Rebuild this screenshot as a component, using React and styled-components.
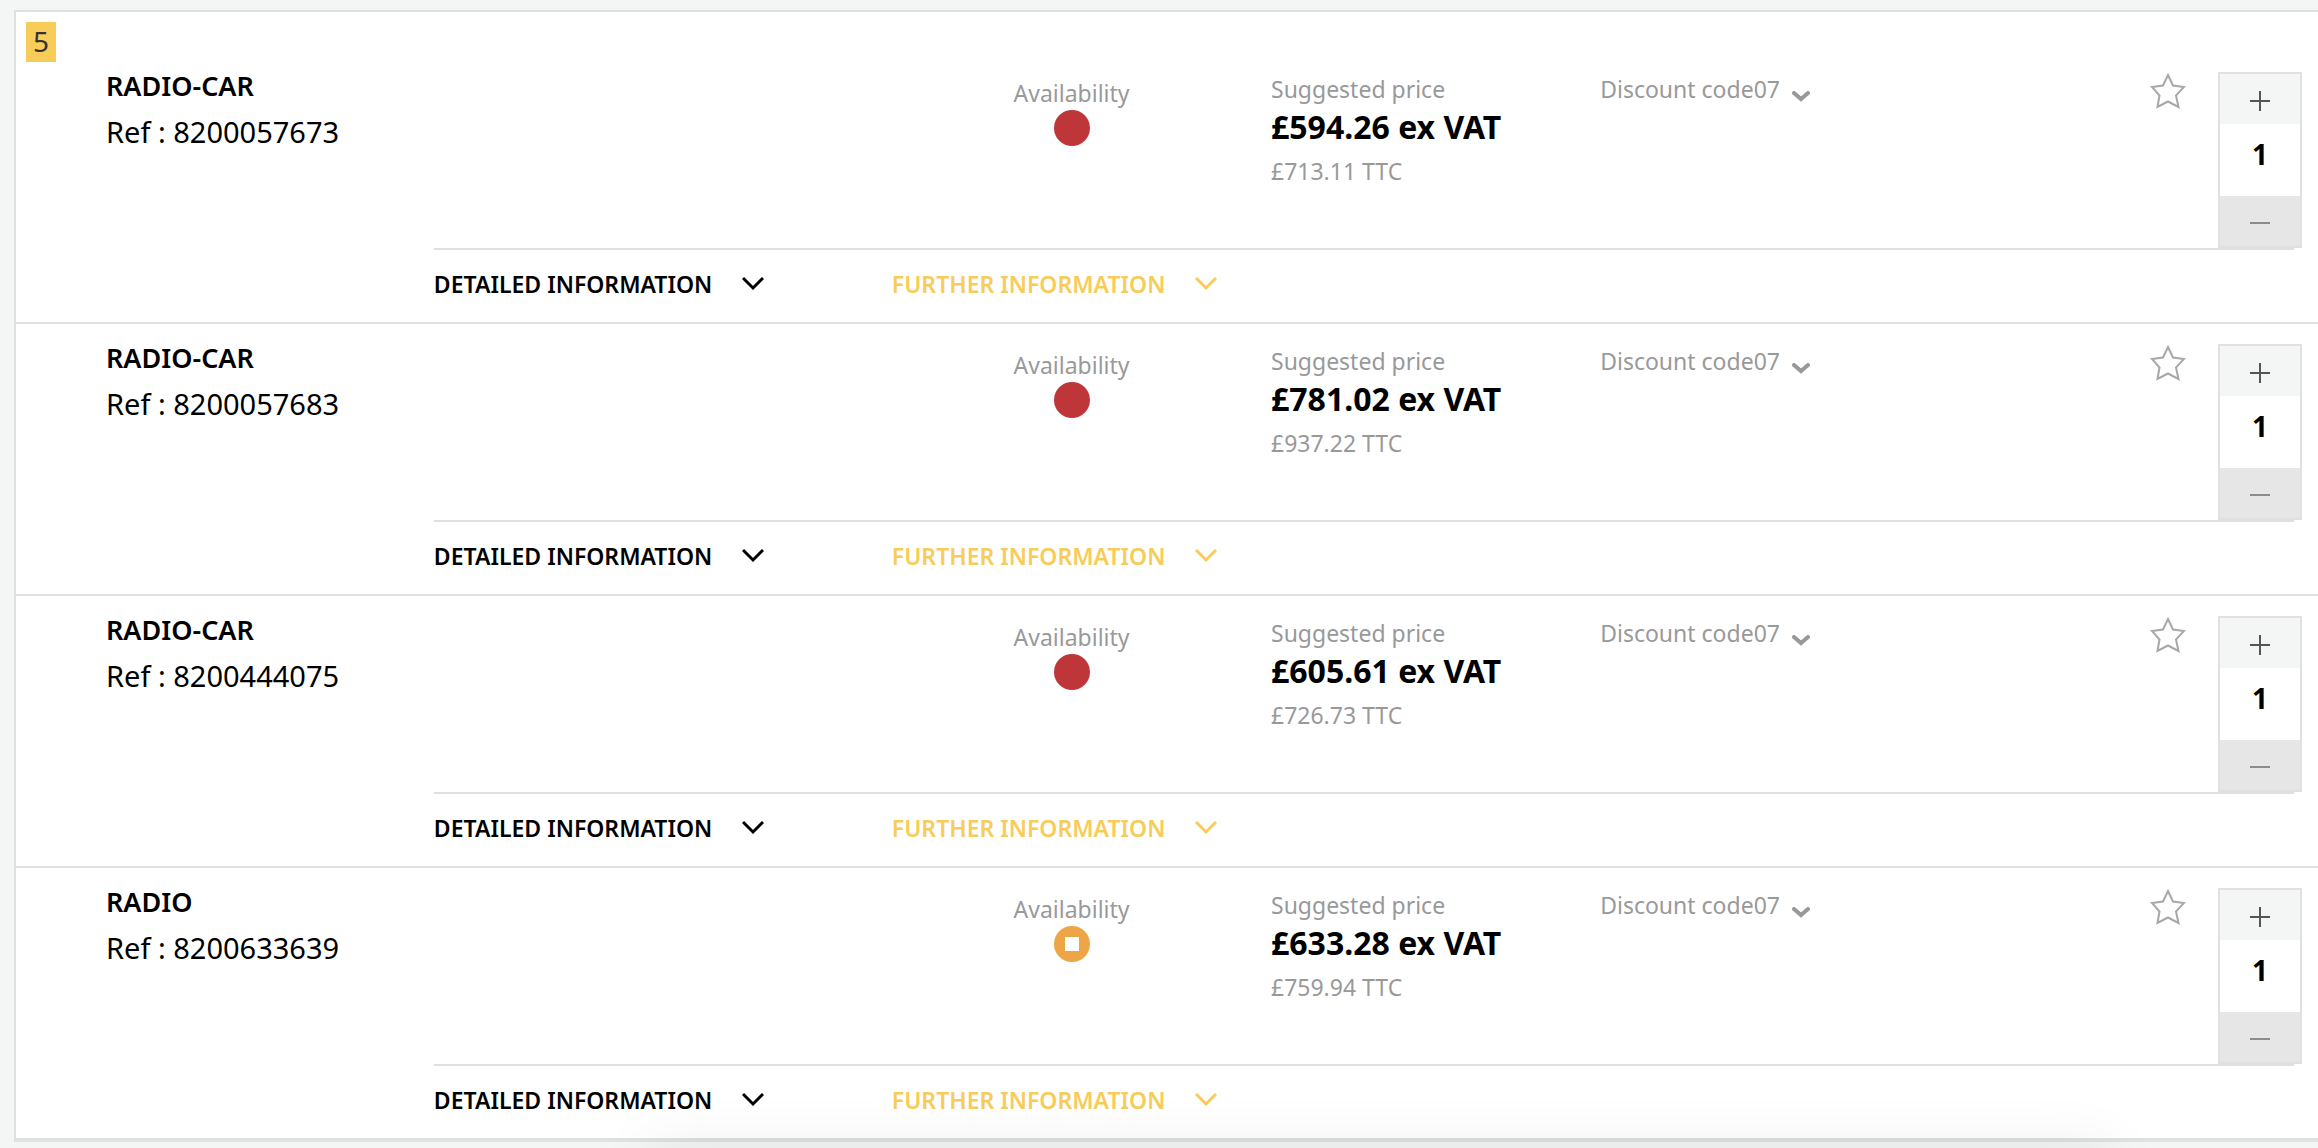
import React, { useState } from 'react'
import styled, { createGlobalStyle } from 'styled-components'

const GlobalStyle = createGlobalStyle`
    * {
        box-sizing: border-box;
    }

    body {
        margin: 0;
        background: #f4f6f5;
        color: #000;
        font-family: 'Noto Sans', 'Open Sans', sans-serif;
        overflow-x: hidden;
    }

    button, input {
        margin: 0;
        padding: 0;
        border: 0;
        background: none;
        color: inherit;
        font-family: inherit;
    }

    button {
        cursor: pointer;
    }

    svg {
        display: block;
    }
`

const Results = styled.main`
    position: relative;
    margin: 10px 0 0 14px;
    padding-top: 40px;
    background: #fff;
    border: 2px solid #e0e0e0;
    border-right: 0;
`

const Count = styled.span`
    position: absolute;
    top: 10px;
    left: 10px;
    width: 30px;
    background: #f8cc58;
    color: #333;
    font-size: 28px;
    line-height: 38px;
    padding-bottom: 2px;
    text-align: center;
`

const Item = styled.article`
    padding-top: 20px;
    border-bottom: 2px solid #e0e0e0;
`

const Summary = styled.div`
    display: grid;
    grid-template-columns: 41.8% 13.1% 14.4% 1fr 68px 84px;
    padding-right: 16px;
`

const Product = styled.div`
    padding-left: 90px;

    h2 {
        margin: 0 0 14px;
        font-size: 27px;
        font-weight: 600;
        line-height: 28px;
    }

    p {
        margin: 0;
        font-size: 29px;
        line-height: 36px;
    }
`

const Availability = styled.div`
    display: flex;
    flex-direction: column;
    align-items: center;
    width: 200px;
    padding-top: 4px;
`

const Label = styled.span`
    color: #999;
    font-size: 23px;
    line-height: 34px;
    white-space: nowrap;
`

const Price = styled.div`
    display: flex;
    flex-direction: column;
    white-space: nowrap;

    strong {
        font-size: 32px;
        font-weight: 700;
        line-height: 42px;
    }

    small {
        color: #999;
        font-size: 23px;
        line-height: 46px;
    }
`

const Discount = styled.button`
    display: flex;
    align-items: flex-start;
    justify-self: start;
    align-self: start;
    gap: 12px;
    color: #999;

    svg {
        margin-top: 19px;
    }
`

const Favourite = styled.button`
    align-self: start;
    width: 36px;
    height: 36px;
    margin-top: 1px;
    color: #a8a8a8;
`

const Stepper = styled.div`
    display: flex;
    flex-direction: column;
    border: 2px solid #e0e0e0;

    input {
        width: 100%;
        height: 72px;
        padding-bottom: 12px;
        font-size: 28px;
        font-weight: 700;
        text-align: center;
    }
`

const StepButton = styled.button`
    display: flex;
    align-items: center;
    justify-content: center;
    height: 50px;
    padding-top: 4px;
    background: ${({ $muted }) => ($muted ? '#e6e6e6' : '#f4f6f5')};
    color: ${({ $muted }) => ($muted ? '#8c8c8c' : '#555')};
`

const Panels = styled.div`
    display: grid;
    grid-template-columns: 458px 1fr;
    justify-items: start;
    height: 74px;
    margin: 0 24px 0 18.15%;
    padding-bottom: 4px;
    border-top: 2px solid #e0e0e0;
`

const PanelToggle = styled.button`
    display: flex;
    align-items: center;
    gap: 30px;
    color: ${({ $accent }) => ($accent ? '#f8cc58' : '#000')};
    font-size: 23px;
    font-weight: 600;
    white-space: nowrap;
`

const BarShadow = styled.div`
    position: fixed;
    right: 9%;
    bottom: -80px;
    left: 28%;
    height: 80px;
    box-shadow: 0 0 60px rgba(0, 0, 0, 0.08);
    pointer-events: none;
`

const Chevron = () => (
    <svg width="22" height="14" viewBox="0 0 22 14" fill="none" stroke="currentColor" strokeWidth="3" aria-hidden="true">
        <path d="M1 1l10 10L21 1" />
    </svg>
)

const SmallChevron = () => (
    <svg width="18" height="11" viewBox="0 0 18 11" fill="none" stroke="currentColor" strokeWidth="4" strokeLinecap="round" aria-hidden="true">
        <path d="M2 2l7 6 7-6" />
    </svg>
)

const Star = () => (
    <svg width="36" height="36" viewBox="0 0 36 36" fill="none" stroke="currentColor" strokeWidth="2" aria-hidden="true">
        <path d="M18 2l5 10.500 11 1.500-8 8.500 2.500 11.500L18 28.500 7.500 34 9.500 22.500 2 14l11-1.500z" />
    </svg>
)

const Status = ({ partial }) => (
    <svg width="36" height="36" viewBox="0 0 36 36" role="img" aria-label={partial ? 'Limited stock' : 'Out of stock'}>
        <circle cx="18" cy="18" r="18" fill={partial ? '#eda545' : '#be3639'} />
        {partial && <path d="M11 11h14v14H11z" fill="#fff" />}
    </svg>
)

const items = [
    { name: 'RADIO-CAR', reference: '8200057673', price: '£594.26', total: '£713.11' },
    { name: 'RADIO-CAR', reference: '8200057683', price: '£781.02', total: '£937.22' },
    { name: 'RADIO-CAR', reference: '8200444075', price: '£605.61', total: '£726.73' },
    { name: 'RADIO', reference: '8200633639', price: '£633.28', total: '£759.94', partial: true },
]

const Quantity = ({ name }) => {
    const [count, setCount] = useState(1)

    return (
        <Stepper>
            <StepButton type="button" aria-label="Add one" onClick={() => setCount(count + 1)}>
                <svg width="20" height="20" viewBox="0 0 20 20" stroke="currentColor" strokeWidth="2" aria-hidden="true">
                    <path d="M0 10h20M10 0v20" />
                </svg>
            </StepButton>
            <input
                type="text"
                inputMode="numeric"
                aria-label={`Quantity of ${name}`}
                value={count}
                onChange={(e) => setCount(Number(e.target.value) || 1)}
            />
            <StepButton type="button" $muted aria-label="Remove one" onClick={() => setCount(Math.max(1, count - 1))}>
                <svg width="20" height="20" viewBox="0 0 20 20" stroke="currentColor" strokeWidth="2" aria-hidden="true">
                    <path d="M0 10h20" />
                </svg>
            </StepButton>
        </Stepper>
    )
}

const App = () => {
    return (
        <>
            <GlobalStyle />
            <Results>
                <Count>5</Count>
                {items.map(({ name, reference, price, total, partial }) => (
                    <Item key={reference}>
                        <Summary>
                            <Product>
                                <h2>{name}</h2>
                                <p>Ref : {reference}</p>
                            </Product>
                            <Availability>
                                <Label>Availability</Label>
                                <Status partial={partial} />
                            </Availability>
                            <Price>
                                <Label>Suggested price</Label>
                                <strong>{price} ex VAT</strong>
                                <small>{total} TTC</small>
                            </Price>
                            <Discount type="button">
                                <Label>Discount code07</Label>
                                <SmallChevron />
                            </Discount>
                            <Favourite type="button" aria-label="Add to favourites">
                                <Star />
                            </Favourite>
                            <Quantity name={name} />
                        </Summary>
                        <Panels>
                            <PanelToggle type="button">
                                DETAILED INFORMATION
                                <Chevron />
                            </PanelToggle>
                            <PanelToggle type="button" $accent>
                                FURTHER INFORMATION
                                <Chevron />
                            </PanelToggle>
                        </Panels>
                    </Item>
                ))}
            </Results>
            <BarShadow />
        </>
    )
}

export default App
